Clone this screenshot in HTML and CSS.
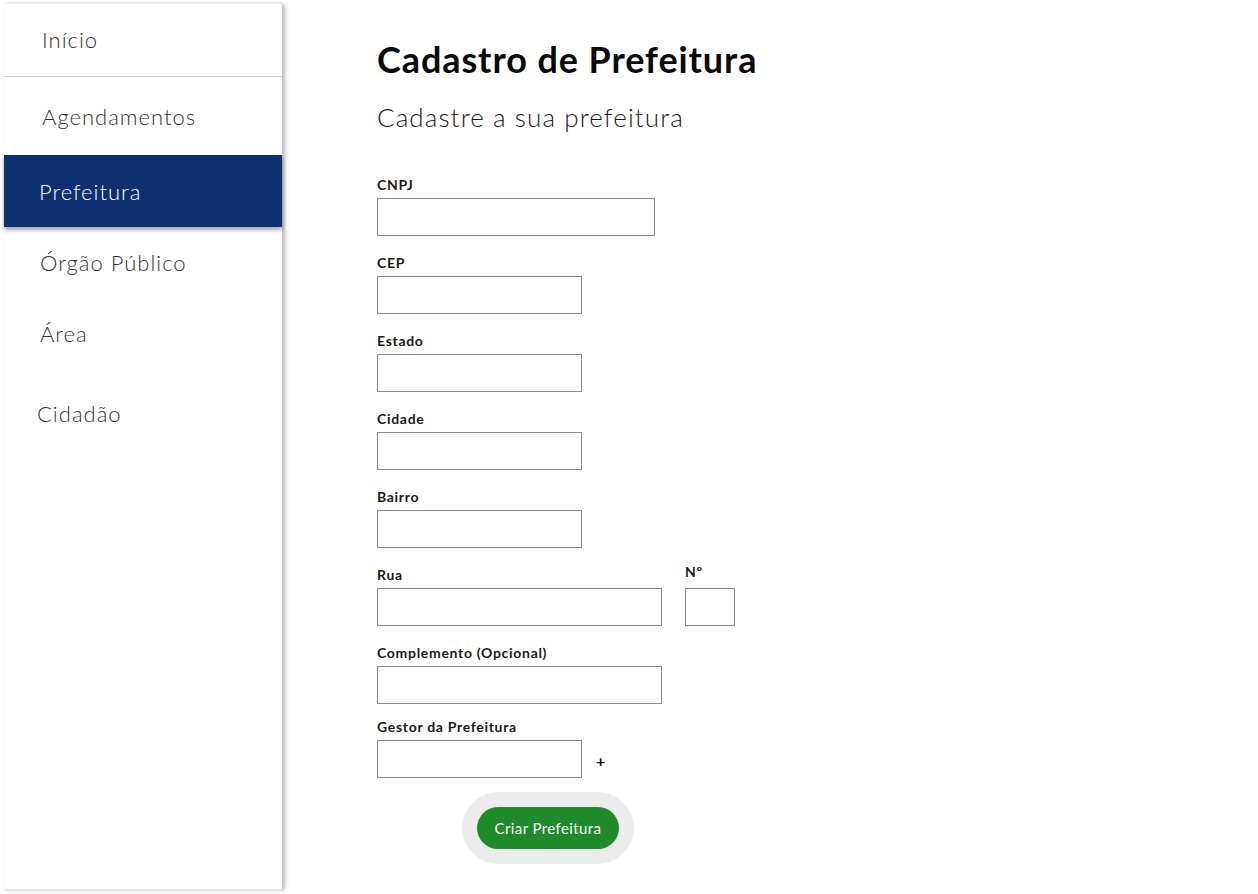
FILE: index.html
```html
<!DOCTYPE html>
<html lang="pt-BR">
<head>
<meta charset="utf-8">
<title>Cadastro de Prefeitura</title>
<link rel="stylesheet" href="styles.css">
</head>
<body>
<div class="page">
  <nav class="sidebar">
    <a class="nav-item nav-item--first" href="#">Início</a>
    <a class="nav-item nav-item--tall" href="#">Agendamentos</a>
    <a class="nav-item nav-item--active" href="#">Prefeitura</a>
    <a class="nav-item nav-item--short" href="#">Órgão Público</a>
    <a class="nav-item nav-item--short" href="#">Área</a>
    <a class="nav-item nav-item--last" href="#">Cidadão</a>
  </nav>
  <main class="content">
    <h1 class="title">Cadastro de Prefeitura</h1>
    <p class="subtitle">Cadastre a sua prefeitura</p>
    <form class="form">
      <div class="field">
        <label class="label">CNPJ</label>
        <input class="input input--wide" type="text">
      </div>
      <div class="field">
        <label class="label">CEP</label>
        <input class="input" type="text">
      </div>
      <div class="field">
        <label class="label">Estado</label>
        <input class="input" type="text">
      </div>
      <div class="field">
        <label class="label">Cidade</label>
        <input class="input" type="text">
      </div>
      <div class="field">
        <label class="label">Bairro</label>
        <input class="input" type="text">
      </div>
      <div class="field-row">
        <div class="field">
          <label class="label">Rua</label>
          <input class="input input--street" type="text">
        </div>
        <div class="field field--num">
          <label class="label">Nº</label>
          <input class="input input--num" type="text">
        </div>
      </div>
      <div class="field field--compl">
        <label class="label">Complemento (Opcional)</label>
        <input class="input input--street" type="text">
      </div>
      <div class="field field--gestor">
        <label class="label">Gestor da Prefeitura</label>
        <div class="gestor-row">
          <input class="input" type="text">
          <span class="plus">+</span>
        </div>
      </div>
      <div class="actions">
        <div class="btn-ring">
          <button class="btn" type="button">Criar Prefeitura</button>
        </div>
      </div>
    </form>
  </main>
</div>
</body>
</html>
```
FILE: styles.css
```css
* { box-sizing: border-box; }
html, body { margin: 0; padding: 0; background: #fff; }
body {
  font-family: "Lato", "Open Sans", sans-serif;
  color: #111;
}
.page {
  display: flex;
  padding: 4px;
  min-height: 894px;
}
.sidebar {
  width: 278px;
  height: 886px;
  flex: none;
  display: flex;
  flex-direction: column;
  background: #fff;
  border-bottom: 1px solid #e2e2e2;
  box-shadow: 3px 0 4px rgba(0,0,0,0.28);
}
.nav-item {
  display: flex;
  align-items: center;
  height: 71px;
  padding-left: 36px;
  font-size: 22px;
  font-weight: 300;
  letter-spacing: 1px;
  color: #333;
  text-decoration: none;
}
.nav-item--first {
  height: 73px;
  padding-left: 38px;
  padding-bottom: 2px;
  border-bottom: 1px solid #cfcfcf;
}
.nav-item--tall { height: 78px; padding-left: 38px; }
.nav-item--active {
  height: 72px;
  padding-left: 35px;
  background: #0c3070;
  color: #fff;
  box-shadow: 0 3px 4px rgba(0,0,0,0.35);
  position: relative;
}
.nav-item--short { height: 71px; }
.nav-item--last { height: 88px; padding-left: 33px; }

.content {
  padding-left: 95px;
  padding-top: 30px;
}
.title {
  margin: 0;
  font-size: 36px;
  font-weight: 700;
  letter-spacing: 0.9px;
  line-height: 50px;
  color: #0a0a0a;
}
.subtitle {
  margin: 15px 0 0 0;
  font-size: 26px;
  font-weight: 300;
  letter-spacing: 1.1px;
  line-height: 36px;
  color: #1a1a1a;
}
.form {
  margin-top: 41px;
  display: flex;
  flex-direction: column;
}
.field {
  display: flex;
  flex-direction: column;
  margin-bottom: 18px;
}
.field-row {
  display: flex;
  gap: 23px;
}
.field--num .label { margin-top: -3px; margin-bottom: 7px; }
.label {
  font-size: 14px;
  font-weight: 700;
  letter-spacing: 0.7px;
  line-height: 18px;
  margin-bottom: 4px;
  color: #1a1a1a;
}
.input {
  width: 205px;
  height: 38px;
  border: 1px solid #8a8a8a;
  border-radius: 0;
  background: #fff;
  padding: 0 6px;
  font: inherit;
}
.input--wide { width: 278px; }
.input--street { width: 285px; }
.input--num { width: 50px; }
.field--compl { margin-bottom: 14px; }
.field--gestor { margin-bottom: 14px; }
.gestor-row {
  display: flex;
  align-items: center;
}
.plus {
  margin-left: 14px;
  font-size: 16px;
  font-weight: 700;
  padding-top: 2px;
}
.actions {
  padding-left: 85px;
}
.btn-ring {
  display: inline-flex;
  padding: 15px;
  background: #ececec;
  border-radius: 36px;
}
.btn {
  width: 142px;
  height: 42px;
  border: none;
  border-radius: 21px;
  background: #1e8b28;
  color: #fff;
  font-family: inherit;
  font-size: 15px;
  letter-spacing: 0.4px;
  padding: 0;
}
```
